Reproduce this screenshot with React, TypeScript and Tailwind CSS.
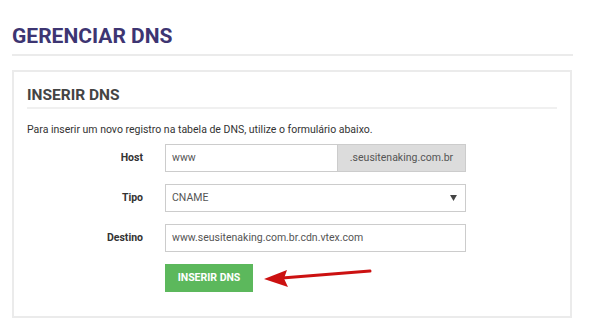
export default function App() {
  const font = { fontFamily: 'Roboto, "Liberation Sans", sans-serif' };
  return (
    <div className="relative w-[596px] h-[328px] bg-white overflow-hidden" style={font}>
      <div className="ml-3 w-[561px] pt-[23px]">
        <h1 className="text-[21px] leading-[26px] font-bold text-[#3d3572] pb-[5px] border-b-2 border-[#ebebeb]">
          GERENCIAR DNS
        </h1>
        <div className="mt-[14px] w-[560px] h-[248px] border-2 border-[#ebebeb] px-[13px]">
          <h2 className="mt-[14px] text-[15.5px] leading-[18px] font-bold text-[#444] pb-[3px] border-b-2 border-[#f0f0f0]">
            INSERIR DNS
          </h2>
          <p className="mt-[14px] text-[10.5px] leading-[14px] text-[#333]">
            Para inserir um novo registro na tabela de DNS, utilize o formulário abaixo.
          </p>
          <div className="mt-[7px] flex flex-col gap-[12px]">
            <div className="flex items-center gap-[22px]">
              <label className="w-[116px] text-right text-[10.5px] font-bold text-[#333]">Host</label>
              <div className="flex h-[28px] w-[301px]">
                <div className="flex-1 border border-[#ccc] border-r-0 flex items-center px-[6px] text-[10.5px] text-[#555]">
                  www
                </div>
                <div className="w-[129px] bg-[#dcdcdc] border border-[#ccc] flex items-center justify-center text-[10.5px] text-[#555]">
                  .seusitenaking.com.br
                </div>
              </div>
            </div>
            <div className="flex items-center gap-[22px]">
              <label className="w-[116px] text-right text-[10.5px] font-bold text-[#333]">Tipo</label>
              <div className="flex h-[28px] w-[301px] border border-[#ccc] items-center justify-between px-[6px] text-[10.5px] text-[#555]">
                <span>CNAME</span>
                <svg width="7" height="6" viewBox="0 0 8 7" className="mr-[2px]">
                  <path d="M0 0 H8 L4 7 Z" fill="#444" />
                </svg>
              </div>
            </div>
            <div className="flex items-center gap-[22px]">
              <label className="w-[116px] text-right text-[10.5px] font-bold text-[#333]">Destino</label>
              <div className="flex h-[28px] w-[301px] border border-[#ccc] items-center px-[6px] text-[10.5px] text-[#555]">
                www.seusitenaking.com.br.cdn.vtex.com
              </div>
            </div>
            <div className="flex items-center gap-[22px]">
              <div className="w-[116px]" />
              <button className="h-[28px] w-[88px] bg-[#5cb85c] text-white text-[10.5px] font-bold">
                INSERIR DNS
              </button>
            </div>
          </div>
        </div>
      </div>
      <svg className="absolute left-0 top-0" width="596" height="328" viewBox="0 0 596 328">
        <line x1="370" y1="271" x2="282" y2="278" stroke="#cc1111" strokeWidth="3" strokeLinecap="round" />
        <path d="M264 279 L287 270 L284 278.5 L288 287 Z" fill="#cc1111" />
      </svg>
    </div>
  );
}
